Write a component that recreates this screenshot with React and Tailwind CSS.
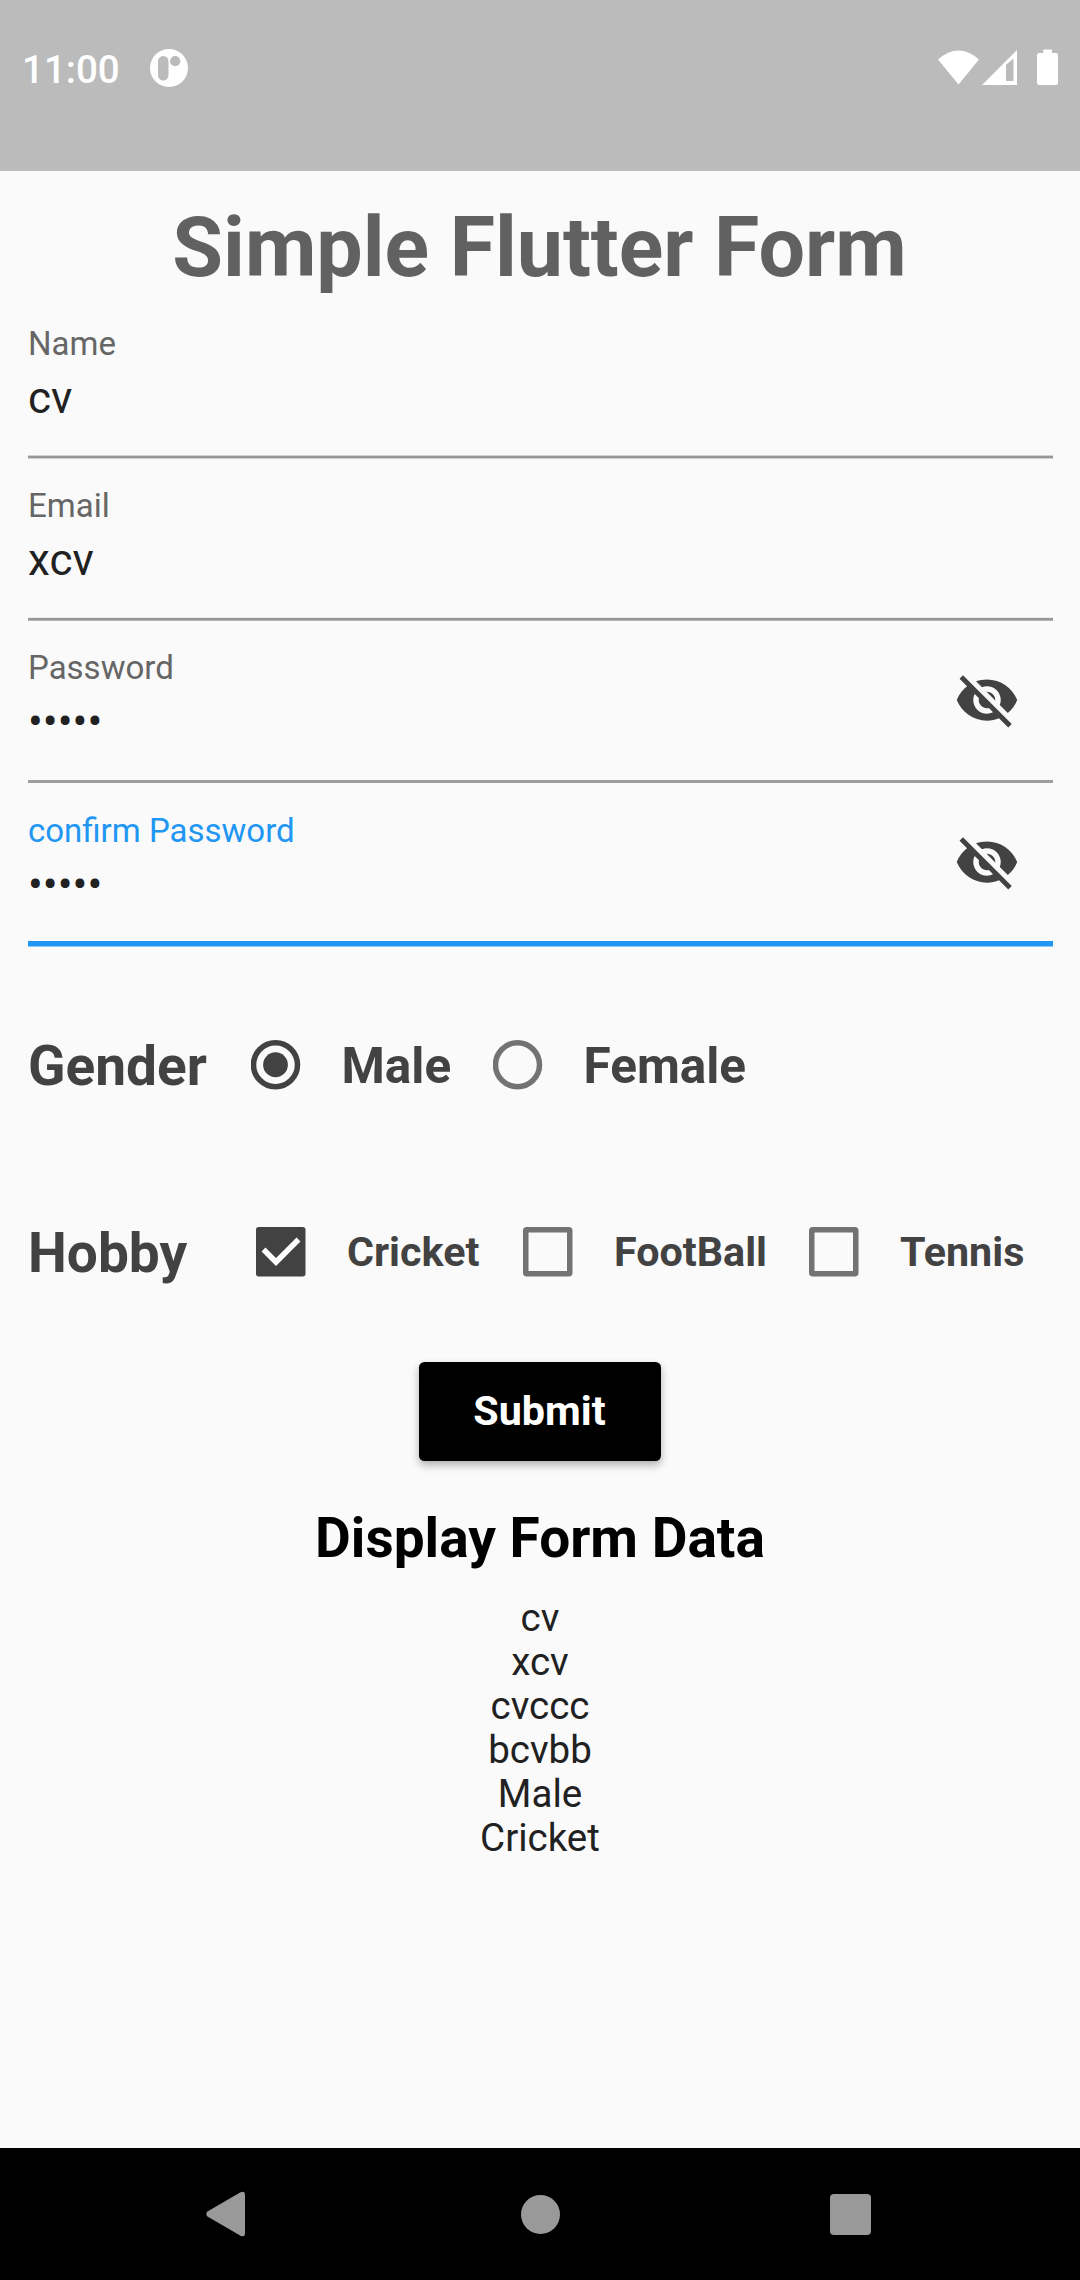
import { MdVisibilityOff } from "react-icons/md";

function StatusBar() {
  return (
    <header className="flex h-[171px] items-start justify-between bg-[#bbbbbb] text-white">
      <div className="flex items-center pt-[45px] pl-[22px]">
        <span className="w-[128px] text-[38.5px] leading-[50px] font-medium">11:00</span>
        <svg width="38" height="38" viewBox="0 0 38 38" className="-mt-[5px]">
          <circle cx="19" cy="19" r="19" fill="#fff" />
          <rect x="8" y="7" width="10.5" height="24.5" rx="5.2" fill="#bbb" />
          <circle cx="25.2" cy="12.2" r="5.1" fill="#bbb" />
        </svg>
      </div>
      <svg width="122" height="38" viewBox="0 0 122 38" className="mt-[48px] mr-[21px]" fill="#fff">
        <path d="M1 11.5Q21.5 -6.500 42 11.500L21.500 36.500Z" />
        <path
          fillRule="evenodd"
          d="M45 37L80 2V37ZM69 16.800V33H76.500V10.500Z"
        />
        <path d="M106.200 1.500H115V5H118.800Q121 5 121 7.200V34.800Q121 37 118.800 37H102.200Q100 37 100 34.800V7.200Q100 5 102.200 5H106.200Z" />
      </svg>
    </header>
  );
}

function Field({ label, value, height, top = "pt-[28px]", line, focused, secret }) {
  return (
    <div className={`flex flex-col ${height}`}>
      <div className="flex flex-1 justify-between">
        <div className={top}>
          <div
            className={`text-[33px] leading-[39px] ${focused ? "text-[#2196f3]" : "text-[#666666]"}`}
          >
            {label}
          </div>
          <div className="mt-[8px] text-[44px] leading-[54px] text-[#212121]">{value}</div>
        </div>
        {secret && <MdVisibilityOff className="mt-[46px] mr-[33px] size-[66px] text-[#424242]" />}
      </div>
      <div className={line} />
    </div>
  );
}

function Radio({ checked }) {
  return (
    <svg width="50" height="50" viewBox="0 0 50 50" className="shrink-0">
      <circle
        cx="24.500"
        cy="24.750"
        r="22"
        fill="none"
        stroke={checked ? "#424242" : "#737373"}
        strokeWidth="5.500"
      />
      {checked && <circle cx="24.500" cy="24.750" r="12.400" fill="#424242" />}
    </svg>
  );
}

function Checkbox({ checked }) {
  return (
    <svg width="50" height="50" viewBox="0 0 50 50" className="shrink-0">
      {checked ? (
        <>
          <rect width="49.500" height="49.500" rx="2.750" fill="#424242" />
          <path d="M7.500 22.500L20 35L42.500 12.500" fill="none" stroke="#fff" strokeWidth="5.500" />
        </>
      ) : (
        <rect
          x="2.750"
          y="2.750"
          width="44"
          height="44"
          rx="1"
          fill="none"
          stroke="#737373"
          strokeWidth="5.500"
        />
      )}
    </svg>
  );
}

function NavBar() {
  return (
    <nav className="flex h-[132px] items-center justify-between bg-black pr-[209px] pl-[206px]">
      <svg width="40" height="46" viewBox="0 0 40 46" fill="#999">
        <path d="M1.500 20.500L34.500 1.300Q39 -0.500 39 4V42Q39 46.500 34.500 44.700L1.500 25.500Q-1 23 1.500 20.500Z" />
      </svg>
      <span className="ml-[5px] size-[39px] rounded-full bg-[#999999]" />
      <span className="size-[41px] rounded-[4px] bg-[#999999]" />
    </nav>
  );
}

const results = ["cv", "xcv", "cvccc", "bcvbb", "Male", "Cricket"];

export default function App() {
  return (
    <div className="flex h-[2280px] w-[1080px] flex-col overflow-hidden bg-[#fafafa] font-[Roboto,sans-serif]">
      <StatusBar />
      <main className="flex-1">
        <h1 className="mt-[28px] pr-px text-center text-[82.5px] leading-[97px] font-bold text-[#616161]">
          Simple Flutter Form
        </h1>
        <form className="pr-[27px] pl-[28px]">
          <Field
            label="Name"
            value="cv"
            height="h-[163px]"
            line="h-[4px] border-y border-[#d2d2d2] bg-[#979797]"
          />
          <Field
            label="Email"
            value="xcv"
            height="h-[162px]"
            top="pt-[27px]"
            line="h-[4px] border-y border-t-[#ebebeb] border-b-[#b5b5b5] bg-[#979797]"
          />
          <Field
            label="Password"
            value="•••••"
            height="h-[162px]"
            top="pt-[27px]"
            line="h-[3px] bg-[#9e9e9e]"
            secret
          />
          <Field
            label="confirm Password"
            value="•••••"
            height="h-[164px]"
            line="h-[6px] border-b border-b-[#90caf9] bg-[#2196f3]"
            focused
            secret
          />
        </form>

        <div className="mt-[62px] ml-[28px] flex h-[112px] items-center font-bold text-[#424242]">
          <span className="w-[223px] pt-[2px] text-[55px] leading-[64px]">Gender</span>
          <Radio checked />
          <span className="w-[192px] pt-[2px] pl-[40.5px] text-[49.5px] leading-[58px]">Male</span>
          <Radio />
          <span className="pt-[2px] pl-[40.5px] text-[49.5px] leading-[58px]">Female</span>
        </div>

        <div className="mt-[75px] ml-[28px] flex h-[112px] items-center font-bold text-[#424242]">
          <span className="w-[228px] pt-[2px] text-[55px] leading-[64px]">Hobby</span>
          <Checkbox checked />
          <span className="w-[217px] pl-[41px] text-[41.25px] leading-[48px]">Cricket</span>
          <Checkbox />
          <span className="w-[236px] pl-[41px] text-[41.25px] leading-[48px]">FootBall</span>
          <Checkbox />
          <span className="pl-[41px] text-[41.25px] leading-[48px]">Tennis</span>
        </div>

        <button className="mx-auto mt-[54px] block h-[99px] w-[242px] rounded-[5.5px] bg-black pr-px text-[41.25px] leading-[99px] font-bold text-white shadow-[0_4px_8px_rgba(0,0,0,0.3)]">
          Submit
        </button>
        <h2 className="mt-[45px] text-center text-[55px] leading-[65px] font-bold text-black">
          Display Form Data
        </h2>
        <div className="mt-[25px] text-center text-[38.5px] leading-[44px] text-[#212121]">
          {results.map((text) => (
            <p key={text}>{text}</p>
          ))}
        </div>
      </main>
      <NavBar />
    </div>
  );
}
